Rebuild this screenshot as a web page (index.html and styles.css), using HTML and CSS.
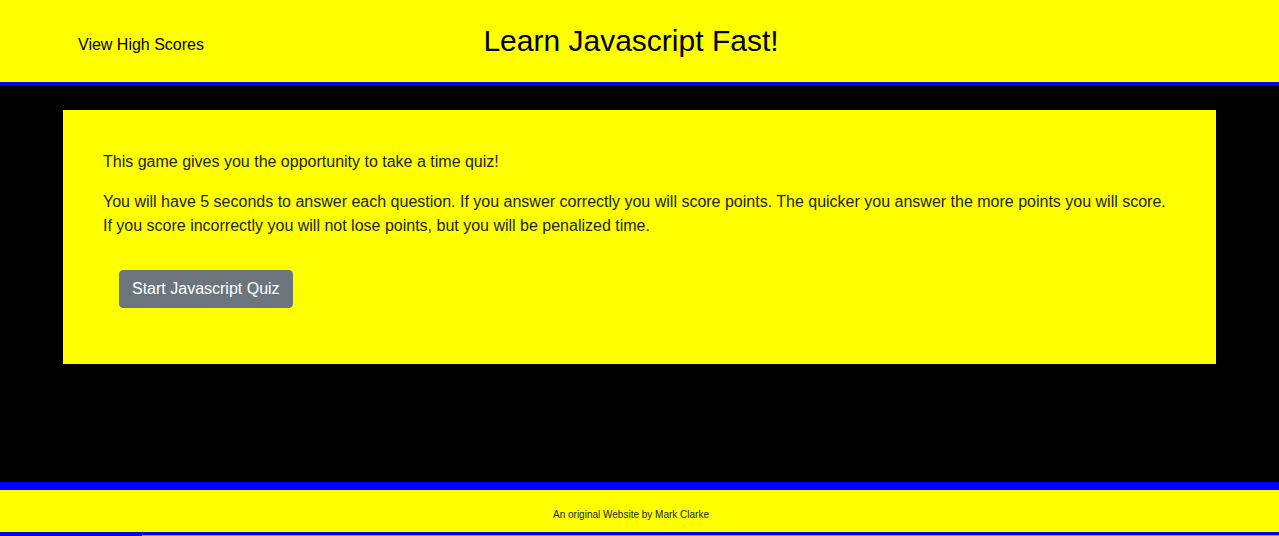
FILE: index.html
```html
<!DOCTYPE html>
<html lang="en">
<head>
<meta charset="utf-8">
<title>Learn Javascript Fast!</title>
<link rel="stylesheet" href="styles.css">
</head>
<body>
<div class="page">
  <header class="site-header">
    <a class="high-scores" href="#">View High Scores</a>
    <h1 class="title">Learn Javascript Fast!</h1>
    <div class="spacer"></div>
  </header>
  <main class="site-main">
    <section class="card">
      <p class="text">This game gives you the opportunity to take a time quiz!</p>
      <p class="text">You will have 5 seconds to answer each question. If you answer correctly you will score points. The quicker you answer the more points you will score. If you score incorrectly you will not lose points, but you will be penalized time.</p>
      <button class="start-btn" type="button">Start Javascript Quiz</button>
    </section>
  </main>
  <footer class="site-footer">
    <p class="credit">An original Website by Mark Clarke</p>
  </footer>
  <div class="edge"></div>
</div>
</body>
</html>
```
FILE: styles.css
```css
* { box-sizing: border-box; }
html, body { margin: 0; padding: 0; }
body {
  font-family: "Liberation Sans", Arial, sans-serif;
  color: #212529;
  background: #000;
  overflow: hidden;
}
.page { width: 1279px; }
.site-header {
  width: 1279px;
  height: 85px;
  padding-right: 17px;
  background: #ffff00;
  border-bottom: 3px solid #0000ff;
  display: grid;
  grid-template-columns: 1fr auto 1fr;
  align-items: center;
}
.high-scores {
  justify-self: start;
  margin-left: 78px;
  margin-top: 8px;
  font-size: 16px;
  color: #000;
  text-decoration: none;
}
.title {
  margin: 0;
  font-size: 30px;
  font-weight: 400;
  color: #000;
  line-height: 1.2;
}
.site-main {
  width: 1279px;
  height: 405px;
  background: #000;
  border-bottom: 8px solid #0000ff;
  padding-top: 25px;
}
.card {
  margin-left: 63px;
  width: 1153px;
  background: #ffff00;
  padding: 40px;
}
.text {
  margin: 0 0 16px;
  font-size: 16px;
  line-height: 24px;
}
.start-btn {
  display: inline-block;
  margin: 16px 16px 16px;
  height: 38px;
  padding: 0 12px;
  background: #6c757d;
  color: #fff;
  border: 1px solid #6c757d;
  border-radius: 4px;
  font-family: inherit;
  font-size: 16px;
  line-height: 24px;
}
.site-footer {
  width: 1279px;
  height: 45px;
  padding-right: 17px;
  background: #ffff00;
  border-bottom: 3px solid #0000ff;
  display: flex;
  align-items: center;
}
.credit {
  width: 100%;
  margin: 7px 0 0;
  text-align: center;
  font-size: 10px;
  color: #212529;
}
.edge {
  width: 1279px;
  height: 1px;
  background: linear-gradient(to right, #1e1e1e 142px, #a3a3a3 142px);
}
```
